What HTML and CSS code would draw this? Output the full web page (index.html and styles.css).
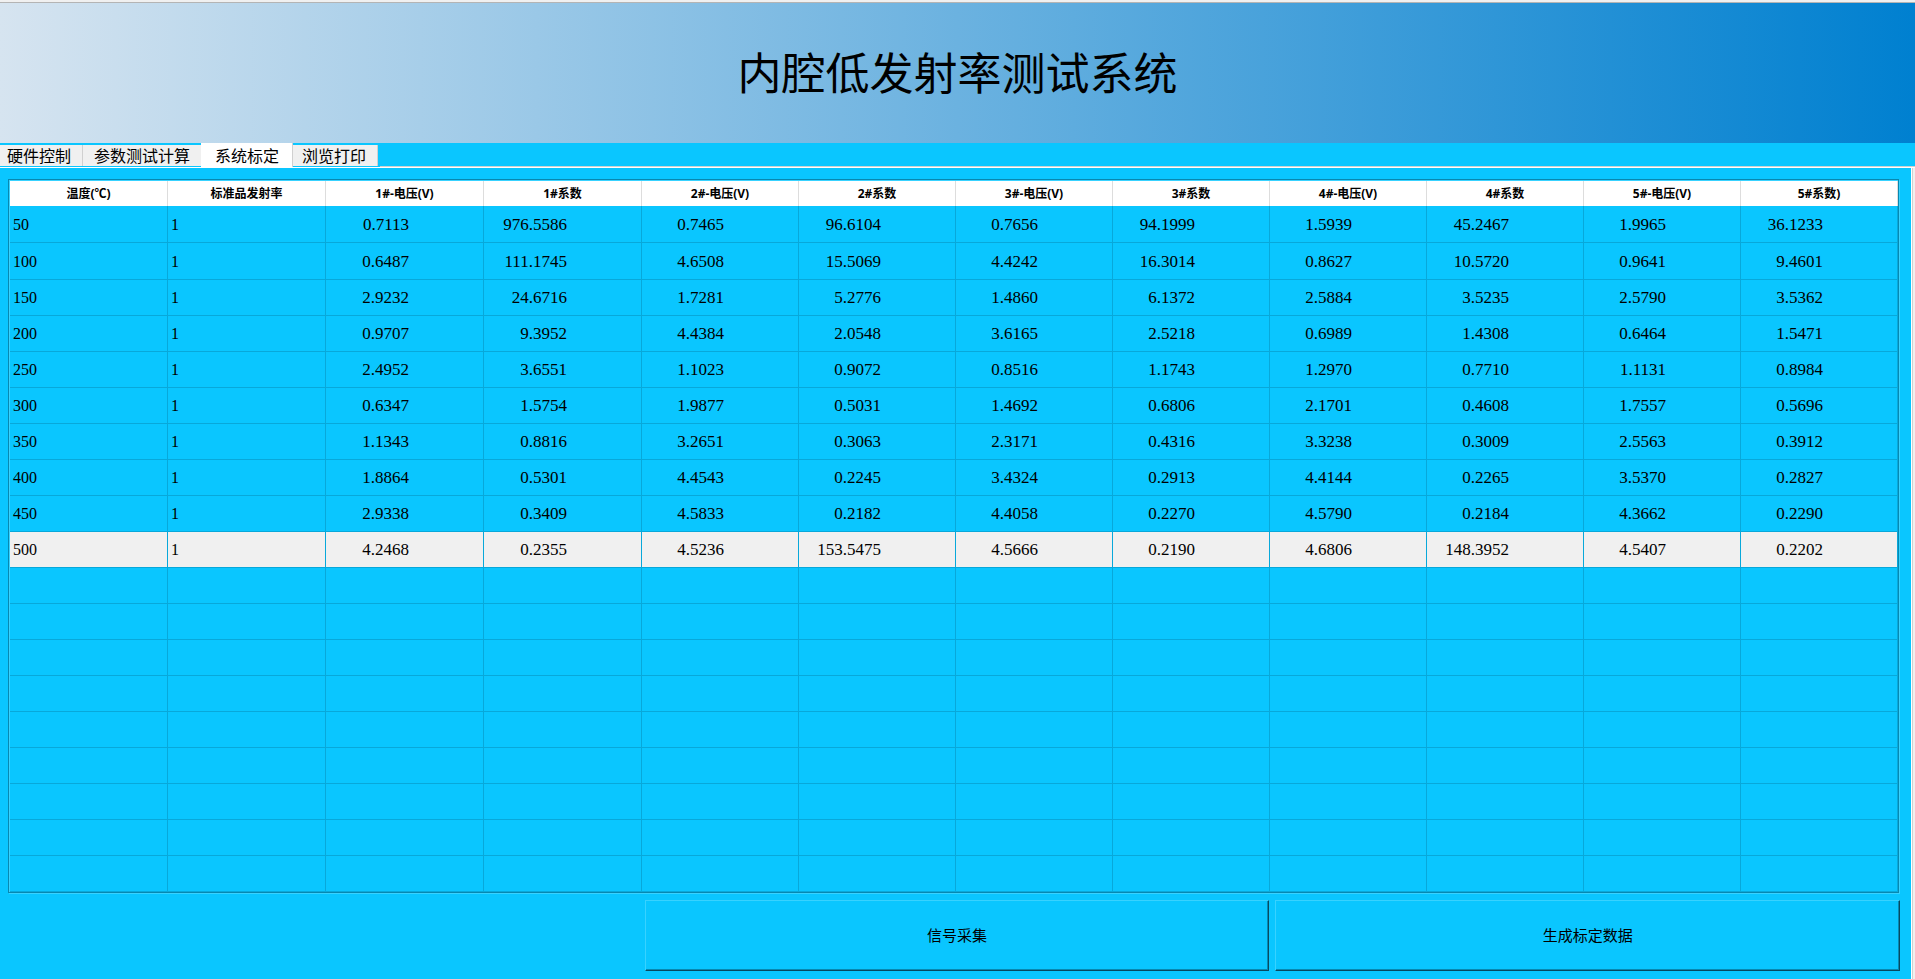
FILE: index.html
```html
<!DOCTYPE html>
<html lang="zh-CN">
<head>
<meta charset="utf-8">
<title>内腔低发射率测试系统</title>
<link rel="stylesheet" href="styles.css">
</head>
<body>
<header class="banner"><h1 class="title">内腔低发射率测试系统</h1></header>
<nav class="tabs" role="tablist">
<button class="tab tab-first" role="tab">硬件控制</button>
<button class="tab tab-wide" role="tab">参数测试计算</button>
<button class="tab tab-active" role="tab" aria-selected="true">系统标定</button>
<button class="tab" role="tab">浏览打印</button>
<span class="tabs-rest"></span>
</nav>
<main class="pane">
<div class="frame">
<table class="grid">
<colgroup><col class="col-lead" span="4"><col span="8"></colgroup>
<thead><tr><th>温度(℃)</th><th>标准品发射率</th><th>1#-电压(V)</th><th>1#系数</th><th>2#-电压(V)</th><th>2#系数</th><th>3#-电压(V)</th><th>3#系数</th><th>4#-电压(V)</th><th>4#系数</th><th>5#-电压(V)</th><th>5#系数)</th></tr></thead>
<tbody>
<tr><td>50</td><td>1</td><td>0.7113</td><td>976.5586</td><td>0.7465</td><td>96.6104</td><td>0.7656</td><td>94.1999</td><td>1.5939</td><td>45.2467</td><td>1.9965</td><td>36.1233</td></tr>
<tr><td>100</td><td>1</td><td>0.6487</td><td>111.1745</td><td>4.6508</td><td>15.5069</td><td>4.4242</td><td>16.3014</td><td>0.8627</td><td>10.5720</td><td>0.9641</td><td>9.4601</td></tr>
<tr><td>150</td><td>1</td><td>2.9232</td><td>24.6716</td><td>1.7281</td><td>5.2776</td><td>1.4860</td><td>6.1372</td><td>2.5884</td><td>3.5235</td><td>2.5790</td><td>3.5362</td></tr>
<tr><td>200</td><td>1</td><td>0.9707</td><td>9.3952</td><td>4.4384</td><td>2.0548</td><td>3.6165</td><td>2.5218</td><td>0.6989</td><td>1.4308</td><td>0.6464</td><td>1.5471</td></tr>
<tr><td>250</td><td>1</td><td>2.4952</td><td>3.6551</td><td>1.1023</td><td>0.9072</td><td>0.8516</td><td>1.1743</td><td>1.2970</td><td>0.7710</td><td>1.1131</td><td>0.8984</td></tr>
<tr><td>300</td><td>1</td><td>0.6347</td><td>1.5754</td><td>1.9877</td><td>0.5031</td><td>1.4692</td><td>0.6806</td><td>2.1701</td><td>0.4608</td><td>1.7557</td><td>0.5696</td></tr>
<tr><td>350</td><td>1</td><td>1.1343</td><td>0.8816</td><td>3.2651</td><td>0.3063</td><td>2.3171</td><td>0.4316</td><td>3.3238</td><td>0.3009</td><td>2.5563</td><td>0.3912</td></tr>
<tr><td>400</td><td>1</td><td>1.8864</td><td>0.5301</td><td>4.4543</td><td>0.2245</td><td>3.4324</td><td>0.2913</td><td>4.4144</td><td>0.2265</td><td>3.5370</td><td>0.2827</td></tr>
<tr><td>450</td><td>1</td><td>2.9338</td><td>0.3409</td><td>4.5833</td><td>0.2182</td><td>4.4058</td><td>0.2270</td><td>4.5790</td><td>0.2184</td><td>4.3662</td><td>0.2290</td></tr>
<tr class="selected"><td>500</td><td>1</td><td>4.2468</td><td>0.2355</td><td>4.5236</td><td>153.5475</td><td>4.5666</td><td>0.2190</td><td>4.6806</td><td>148.3952</td><td>4.5407</td><td>0.2202</td></tr>
<tr><td></td><td></td><td></td><td></td><td></td><td></td><td></td><td></td><td></td><td></td><td></td><td></td></tr>
<tr><td></td><td></td><td></td><td></td><td></td><td></td><td></td><td></td><td></td><td></td><td></td><td></td></tr>
<tr><td></td><td></td><td></td><td></td><td></td><td></td><td></td><td></td><td></td><td></td><td></td><td></td></tr>
<tr><td></td><td></td><td></td><td></td><td></td><td></td><td></td><td></td><td></td><td></td><td></td><td></td></tr>
<tr><td></td><td></td><td></td><td></td><td></td><td></td><td></td><td></td><td></td><td></td><td></td><td></td></tr>
<tr><td></td><td></td><td></td><td></td><td></td><td></td><td></td><td></td><td></td><td></td><td></td><td></td></tr>
<tr><td></td><td></td><td></td><td></td><td></td><td></td><td></td><td></td><td></td><td></td><td></td><td></td></tr>
<tr><td></td><td></td><td></td><td></td><td></td><td></td><td></td><td></td><td></td><td></td><td></td><td></td></tr>
<tr><td></td><td></td><td></td><td></td><td></td><td></td><td></td><td></td><td></td><td></td><td></td><td></td></tr>
</tbody>
</table>
</div>
<div class="actions">
<button class="action action-collect">信号采集</button>
<button class="action">生成标定数据</button>
</div>
</main>
</body>
</html>
```

FILE: styles.css
```css
:root {
  --cyan: #0ac6ff;
  --line: #08a8da;
  --shade: #0888b0;
  --light: #38d2ff;
  --face: #f0f0f0;
}
* { box-sizing: border-box; }
body {
  margin: 0;
  min-height: 100vh;
  display: flex;
  flex-direction: column;
  background: var(--face);
  color: #000;
  font-family: "Liberation Serif", "Noto Sans CJK SC", serif;
}
button {
  margin: 0;
  padding: 0;
  border: 0;
  border-radius: 0;
  color: inherit;
  font-family: "Noto Sans CJK SC", sans-serif;
}
.banner {
  height: 141px;
  margin-top: 2px;
  padding-bottom: 4px;
  border-top: 1px solid #b4b4b4;
  display: flex;
  align-items: center;
  justify-content: center;
  background: linear-gradient(to right, #d6e4f0, #0080d0);
}
.title {
  margin: 0;
  font: 400 44px/64px KaiTi, STKaiti, "Noto Sans CJK SC", sans-serif;
}
.tabs {
  display: flex;
  height: 25px;
  padding-top: 2px;
  background: var(--cyan);
  border-bottom: 1px solid #fff;
}
.tab {
  height: 21px;
  padding: 0 11px 0 9px;
  background: var(--face);
  border-right: 1px solid #d0d0d0;
  font-size: 16px;
  line-height: 21px;
}
.tab-first { padding: 0 11px 0 7px; }
.tab-wide { padding: 0 11px; border-right: 0; }
.tab-active {
  height: 24px;
  margin-top: -2px;
  padding: 0 13px 0 14px;
  background: #fff;
}
.tabs-rest {
  flex: 1;
  margin-left: 2px;
  border-bottom: 1px solid #d0d0d0;
}
.pane {
  flex: 1;
  margin-right: 3px;
  padding: 11px 12px 8px 8px;
  background: var(--cyan);
  border-right: 1px solid #fff;
  box-shadow: 1px 0 0 #d0d0d0;
}
.frame {
  border: 1px solid var(--shade);
  padding: 1px 0 0 1px;
  background: var(--light);
  box-shadow: 1px 1px 0 var(--light);
}
.grid {
  width: 100%;
  table-layout: fixed;
  border-collapse: separate;
  border-spacing: 0;
  background: var(--cyan);
}
.col-lead { width: 158px; }
.grid th {
  height: 25px;
  padding: 0;
  background: #fff;
  border-right: 1px solid #ddd;
  font: bold 12px/16px "Open Sans", "Noto Sans CJK SC", sans-serif;
}
.grid td {
  height: 36px;
  padding: 1px 74px 0 0;
  border-right: 1px solid var(--line);
  border-bottom: 1px solid var(--line);
  font-size: 17px;
  line-height: 20px;
  text-align: right;
}
.grid tbody tr:nth-child(-n+2) td { height: 37px; }
.grid td:nth-child(-n+2) {
  padding: 1px 0 0 3px;
  font-size: 16px;
  text-align: left;
}
.selected { background: var(--face); }
.actions {
  display: grid;
  grid-template-columns: 102fr 101fr 101fr;
  gap: 6px;
  margin: 7px -1px 0 0;
}
.action {
  height: 71px;
  padding-bottom: 2px;
  background: var(--cyan);
  border: 1px solid;
  border-color: var(--light) #084a60 #084a60 var(--light);
  box-shadow: inset -1px -1px 0 var(--shade);
  font-size: 15px;
}
.action-collect { grid-column: 2; }
```
